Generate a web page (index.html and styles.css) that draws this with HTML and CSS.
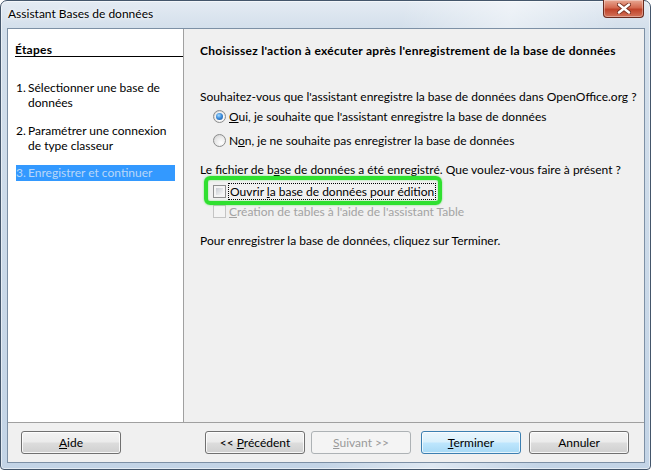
FILE: index.html
```html
<!DOCTYPE html>
<html lang="fr">
<head>
<meta charset="utf-8">
<title>Assistant Bases de données</title>
<link rel="stylesheet" href="styles.css">
</head>
<body>
<div class="window">
  <div class="titlebar">
    <span class="title">Assistant Bases de données</span>
    <span class="close">
      <svg width="14" height="11" viewBox="0 0 14 11">
        <path d="M2 1.5 L12 9.5 M12 1.5 L2 9.5" stroke="#7a3222" stroke-width="4.2" stroke-linecap="round"/>
        <path d="M2 1.5 L12 9.5 M12 1.5 L2 9.5" stroke="#ffffff" stroke-width="2.4" stroke-linecap="round"/>
      </svg>
    </span>
  </div>
  <div class="client">
    <div class="main">
      <div class="steps">
        <div class="steps-head">Étapes</div>
        <div class="step s1"><span class="num">1.</span><span class="txt">Sélectionner une base de données</span></div>
        <div class="step s2"><span class="num">2.</span><span class="txt">Paramétrer une connexion de type classeur</span></div>
        <div class="step s3 current"><span class="num">3.</span><span class="txt">Enregistrer et continuer</span></div>
      </div>
      <div class="content">
        <div class="heading">Choisissez l'action à exécuter après l'enregistrement de la base de données</div>
        <div class="line q1">Souhaitez-vous que l'assistant enregistre la base de données dans OpenOffice.org ?</div>
        <div class="opt r1"><span class="radio on"></span><span class="lbl"><u>O</u>ui, je souhaite que l'assistant enregistre la base de données</span></div>
        <div class="opt r2"><span class="radio"></span><span class="lbl">N<u>o</u>n, je ne souhaite pas enregistrer la base de données</span></div>
        <div class="line q2">Le fichier de b<u>a</u>se de données a été enregistré. Que voulez-vous faire à présent ?</div>
        <div class="opt c1"><span class="grp"><span class="check"></span><span class="lbl focus">Ouvrir <u>l</u>a base de données pour édition</span><span class="mark"></span></span></div>
        <div class="opt c2 disabled"><span class="check off"></span><span class="lbl"><u>C</u>réation de tables à l'aide de l'assistant Table</span></div>
        <div class="line q3">Pour enregistrer la base de données, cliquez sur Terminer.</div>
      </div>
    </div>
    <div class="footer">
      <span class="btn b-help"><span><u>A</u>ide</span></span>
      <span class="btn b-prev"><span>&lt;&lt; <u>P</u>récédent</span></span>
      <span class="btn b-next dis"><span><u>S</u>uivant &gt;&gt;</span></span>
      <span class="btn b-finish def"><span><u>T</u>erminer</span></span>
      <span class="btn b-cancel"><span>Annuler</span></span>
    </div>
  </div>
</div>
</body>
</html>
```

FILE: styles.css
```css
html, body {
  margin: 0;
  padding: 0;
}
body {
  width: 651px;
  height: 470px;
  overflow: hidden;
  background: #ffffff;
  font-family: Lato, "Noto Sans", "DejaVu Sans", sans-serif;
  font-size: 12px;
  color: #000;
}
u {
  text-decoration: underline;
  text-underline-offset: 1px;
}
.window {
  width: 651px;
  height: 470px;
  box-sizing: border-box;
  display: flex;
  flex-direction: column;
  border: 1px solid #44566b;
  border-radius: 7px 7px 4px 4px;
  background:
    linear-gradient(100deg, rgba(255,255,255,0) 55%, rgba(255,255,255,0.45) 70%, rgba(255,255,255,0) 85%),
    linear-gradient(180deg, #e4ebf3 0%, #d3dfeb 28px, #c3d4e6 100%);
  box-shadow: inset 0 0 0 1px rgba(255,255,255,0.55);
}
.titlebar {
  height: 27px;
  flex: 0 0 27px;
  display: flex;
  align-items: flex-start;
}
.title {
  margin-left: 7px;
  margin-top: 5px;
  line-height: 16px;
  color: #000;
  text-shadow: 0 0 6px #fff, 0 0 3px #fff;
}
.close {
  margin-left: auto;
  margin-right: 6px;
  margin-top: -1px;
  width: 41px;
  height: 18px;
  box-sizing: border-box;
  border: 1px solid #6a2a1e;
  border-top: none;
  border-radius: 0 0 4px 4px;
  background: linear-gradient(180deg, #e8a893 0%, #d4694f 45%, #c0432a 55%, #d3735a 100%);
  box-shadow: inset 0 0 0 1px rgba(255,255,255,0.35);
  display: flex;
  align-items: center;
  justify-content: center;
}
.client {
  flex: 1;
  margin: 0 5px 6px 6px;
  border: 1px solid #7d90a5;
  display: flex;
  flex-direction: column;
  background: #f0f0f0;
}
.main {
  flex: 1;
  display: flex;
  border-bottom: 1px solid #a0a0a0;
}
.steps {
  width: 175px;
  flex: 0 0 175px;
  background: #ffffff;
  border-right: 1px solid #a0a0a0;
}
.steps-head {
  margin: 15px 0 0 7px;
  line-height: 12px;
  font-weight: bold;
  letter-spacing: 0.25px;
  border-bottom: 1px solid #000;
}
.step {
  display: grid;
  grid-template-columns: 12px 1fr;
  margin: 0 8px;
  line-height: 15px;
}
.s1 { margin-top: 23px; }
.s2 { margin-top: 13px; }
.s3 { margin-top: 12px; }
.step.current {
  background: #3399ff;
  color: #b9d7f8;
  line-height: 16px;
}
.content {
  flex: 1;
  padding-left: 16px;
  display: flex;
  flex-direction: column;
  background: #f0f0f0;
}
.heading {
  margin-top: 14px;
  line-height: 15px;
  font-weight: bold;
  letter-spacing: 0.26px;
  white-space: nowrap;
}
.line {
  line-height: 15px;
  white-space: nowrap;
}
.q1 { margin-top: 31px; }
.q2 { margin-top: 14px; }
.q3 { margin-top: 14px; }
.opt {
  display: flex;
  align-items: center;
  height: 15px;
  line-height: 15px;
  padding-left: 13px;
  white-space: nowrap;
}
.r1 { margin-top: 5px; }
.r2 { margin-top: 9px; }
.c1 { margin-top: 7px; }
.c2 { margin-top: 5px; }
.grp {
  position: relative;
  display: inline-flex;
  align-items: center;
  height: 15px;
}
.radio {
  width: 13px;
  height: 13px;
  flex: 0 0 13px;
  box-sizing: border-box;
  border-radius: 50%;
  border: 1px solid #8b8c8c;
  background: radial-gradient(circle at 65% 70%, #ffffff 0%, #e8e8e8 55%, #c9c9c9 100%);
  margin-right: 3px;
  position: relative;
}
.radio.on::after {
  content: "";
  position: absolute;
  left: 2px;
  top: 2px;
  width: 7px;
  height: 7px;
  border-radius: 50%;
  background: radial-gradient(circle at 40% 35%, #a9dcff 0%, #3f8fdc 45%, #1a4f96 100%);
  box-shadow: 0 0 0 1px rgba(255,255,255,0.6);
}
.check {
  width: 13px;
  height: 13px;
  flex: 0 0 13px;
  box-sizing: border-box;
  border: 1px solid #8e8f8f;
  padding: 2px;
  background: linear-gradient(135deg, #c8ccd2 0%, #f9f9f9 100%) content-box, #f4f4f4;
  margin-right: 3px;
}
.check.off {
  border-color: #c4c4c4;
  background: #f4f4f4;
}
.focus {
  outline: 1px dotted #000;
  outline-offset: 0;
  padding: 0 1px;
}
.disabled {
  color: #a3a3a3;
}
.mark {
  position: absolute;
  left: -9px;
  top: -8px;
  right: -7px;
  bottom: -6px;
  border: 4px solid #30e030;
  border-radius: 6px;
  box-shadow: 0 0 2px rgba(48,224,48,0.7), inset 0 0 2px rgba(48,224,48,0.6);
  pointer-events: none;
}
.footer {
  height: 39px;
  flex: 0 0 39px;
  box-sizing: border-box;
  padding: 8px 15px 0 13px;
  display: flex;
  align-items: flex-start;
  background: #f0f0f0;
}
.btn {
  width: 100px;
  height: 23px;
  box-sizing: border-box;
  border: 1px solid #707070;
  border-radius: 3px;
  background: linear-gradient(180deg, #f3f3f3 0%, #ebebeb 48%, #dddddd 52%, #cfcfcf 100%);
  box-shadow: inset 0 0 0 1px rgba(255,255,255,0.8);
  display: flex;
  align-items: center;
  justify-content: center;
  line-height: 15px;
  white-space: nowrap;
}
.b-prev { margin-left: auto; }
.b-next { margin-left: 6px; }
.b-finish { margin-left: 10px; }
.b-cancel { margin-left: 8px; }
.btn.dis {
  border-color: #adb2b5;
  background: #f4f4f4;
  box-shadow: none;
  color: #9a9a9a;
}
.btn.def {
  border-color: #3c7fb1;
  background: linear-gradient(180deg, #eaf6fd 0%, #d9f0fc 48%, #bee6fd 52%, #a7d9f5 100%);
  box-shadow: inset 0 0 0 1px rgba(255,255,255,0.7);
}
```
